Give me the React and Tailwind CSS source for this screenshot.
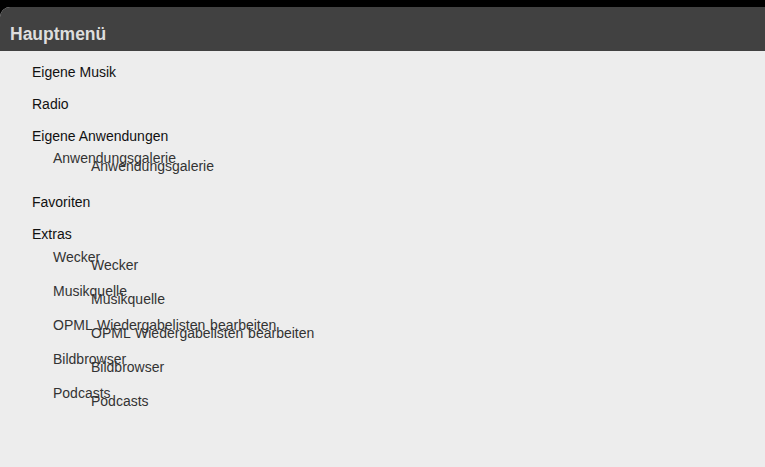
import React from "react";

function Sub({ label }) {
  return (
    <li className="relative h-[34px] leading-[34px] pl-[53px] text-[#333333] whitespace-nowrap">
      <span>{label}</span>
      <span className="absolute left-[91px] top-[8px]">{label}</span>
    </li>
  );
}

function Main({ label }) {
  return (
    <li className="h-[32px] leading-[32px] pl-[32px] text-[#111111] whitespace-nowrap">{label}</li>
  );
}

export default function App() {
  return (
    <div
      className="min-h-screen w-full bg-black pt-[7px]"
      style={{ fontFamily: '"Liberation Sans", Arial, sans-serif' }}
    >
      <div className="min-h-[460px] bg-[#ededed] rounded-tl-[10px] overflow-hidden">
        <div className="h-[44px] bg-[#414141] pl-[10px] pt-[17px]">
          <h1 className="text-[17.5px] leading-[20px] font-bold text-[#dedede]">Hauptmenü</h1>
        </div>
        <ul className="pt-[5px] text-[14px]">
          <Main label="Eigene Musik" />
          <Main label="Radio" />
          <Main label="Eigene Anwendungen" />
          <li>
            <ul className="-mt-[11px] mb-[11px]">
              <Sub label="Anwendungsgalerie" />
            </ul>
          </li>
          <Main label="Favoriten" />
          <Main label="Extras" />
          <li>
            <ul className="-mt-[10px] [word-spacing:1px]">
              <Sub label="Wecker" />
              <Sub label="Musikquelle" />
              <Sub label="OPML Wiedergabelisten bearbeiten" />
              <Sub label="Bildbrowser" />
              <Sub label="Podcasts" />
            </ul>
          </li>
        </ul>
      </div>
    </div>
  );
}
